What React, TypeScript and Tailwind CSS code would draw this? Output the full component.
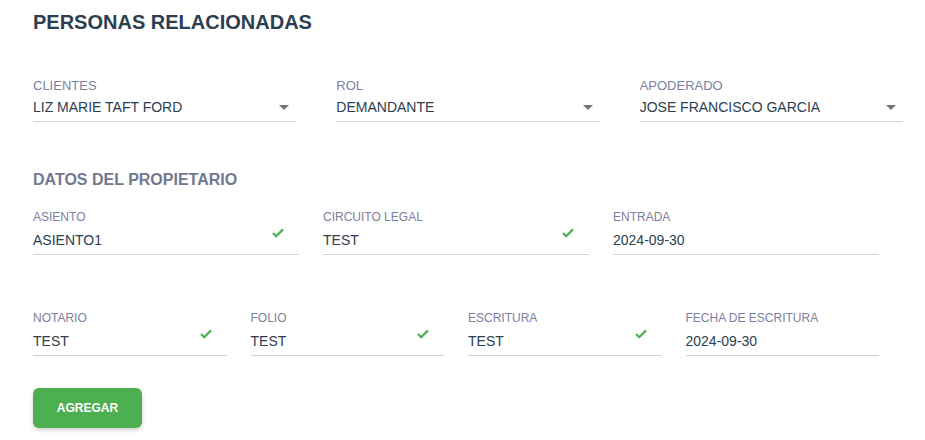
import React from 'react';

const clientes = [
  { label: 'CLIENTES', value: 'LIZ MARIE TAFT FORD' },
  { label: 'ROL', value: 'DEMANDANTE' },
  { label: 'APODERADO', value: 'JOSE FRANCISCO GARCIA' },
];

const datosFila1 = [
  { label: 'ASIENTO', value: 'ASIENTO1', valid: true },
  { label: 'CIRCUITO LEGAL', value: 'TEST', valid: true },
  { label: 'ENTRADA', value: '2024-09-30', valid: false },
];

const datosFila2 = [
  { label: 'NOTARIO', value: 'TEST', valid: true },
  { label: 'FOLIO', value: 'TEST', valid: true },
  { label: 'ESCRITURA', value: 'TEST', valid: true },
  { label: 'FECHA DE ESCRITURA', value: '2024-09-30', valid: false },
];

function ArrowDrop() {
  return (
    <svg width="24" height="24" viewBox="0 0 24 24" className="shrink-0">
      <path d="M7 10l5 5 5-5z" fill="#757575" />
    </svg>
  );
}

function Check() {
  return (
    <svg width="12" height="10" viewBox="0 0 12 10">
      <path d="M1 5l3.2 3.2L11 1.4" fill="none" stroke="#4caf50" strokeWidth="2.2" />
    </svg>
  );
}

function SelectField({ label, value }: { label: string; value: string }) {
  return (
    <div className="border-b border-[#d2d2d8] pb-[4px]">
      <div className="text-[13px] leading-[16px] text-[#7d809c]">{label}</div>
      <div className="mt-[3px] flex h-[20px] items-center justify-between">
        <span className="text-[14px] leading-[20px] text-[#2c3e50]">{value}</span>
        <ArrowDrop />
      </div>
    </div>
  );
}

function TextField({ label, value, valid }: { label: string; value: string; valid: boolean }) {
  return (
    <div className="relative border-b border-[#d2d2da] pb-[4px]">
      <div className="text-[12px] leading-[16px] text-[#7d809c]">{label}</div>
      <div className="mt-[5px] text-[14px] leading-[20px] text-[#2c3e50]">{value}</div>
      {valid && (
        <div className="absolute right-[15px] top-[19px] flex">
          <Check />
        </div>
      )}
    </div>
  );
}

export default function App() {
  return (
    <div
      className="h-[440px] w-[925px] bg-white pl-[33px] pt-[10px]"
      style={{ fontFamily: '"Liberation Sans", Arial, sans-serif' }}
    >
      <h1 className="text-[20px] font-bold leading-[24px] text-[#2c3e50]">PERSONAS RELACIONADAS</h1>

      {/* Clientes */}
      <div className="mt-[44px] grid w-[870px] grid-cols-3 gap-[40px]">
        {clientes.map((c) => (
          <SelectField key={c.label} label={c.label} value={c.value} />
        ))}
      </div>

      {/* Datos del propietario */}
      <h2 className="mt-[48px] text-[16px] font-bold leading-[20px] text-[#72778f]">DATOS DEL PROPIETARIO</h2>

      <div className="mt-[19px] grid w-[846px] grid-cols-3 gap-[24px]">
        {datosFila1.map((d) => (
          <TextField key={d.label} {...d} />
        ))}
      </div>

      <div className="mt-[55px] grid w-[846px] grid-cols-4 gap-[24px]">
        {datosFila2.map((d) => (
          <TextField key={d.label} {...d} />
        ))}
      </div>

      <button className="mt-[32px] h-[40px] w-[109px] rounded-[6px] bg-[#4caf50] text-[12px] font-bold text-white shadow-[0_2px_4px_rgba(0,0,0,0.2)]">
        AGREGAR
      </button>
    </div>
  );
}
